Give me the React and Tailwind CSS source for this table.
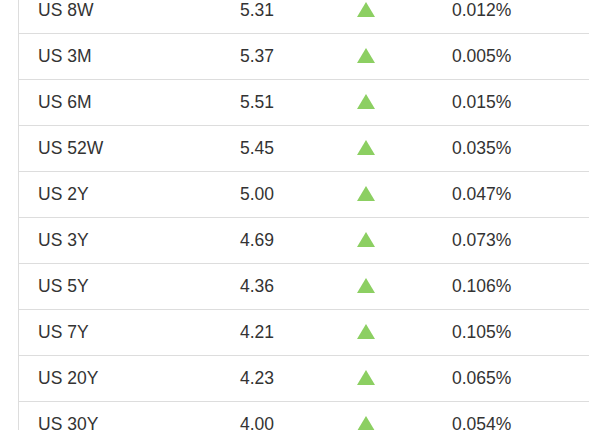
import React from 'react';

const rows = [
  { name: 'US 8W', value: '5.31', change: '0.012%' },
  { name: 'US 3M', value: '5.37', change: '0.005%' },
  { name: 'US 6M', value: '5.51', change: '0.015%' },
  { name: 'US 52W', value: '5.45', change: '0.035%' },
  { name: 'US 2Y', value: '5.00', change: '0.047%' },
  { name: 'US 3Y', value: '4.69', change: '0.073%' },
  { name: 'US 5Y', value: '4.36', change: '0.106%' },
  { name: 'US 7Y', value: '4.21', change: '0.105%' },
  { name: 'US 20Y', value: '4.23', change: '0.065%' },
  { name: 'US 30Y', value: '4.00', change: '0.054%' },
];

const UpArrow = () => (
  <svg width="18" height="15" viewBox="0 0 18 15" className="block">
    <polygon points="9,0 18,15 0,15" fill="#8ccf62" />
  </svg>
);

const App = () => {
  return (
    <div className="h-[430px] w-[589px] overflow-hidden bg-white font-['Liberation_Sans',Arial,sans-serif] text-[17.5px] text-[#333]">
      <div className="ml-[18px] -mt-[12px] border-l border-[#ddd]">
        {rows.map((row) => (
          <div key={row.name} className="flex h-[46px] items-center border-b border-[#ddd]">
            <div className="w-[221px] pl-[19px]">{row.name}</div>
            <div className="w-[117px]">{row.value}</div>
            <div className="w-[95px] -mt-[3px]">
              <UpArrow />
            </div>
            <div>{row.change}</div>
          </div>
        ))}
      </div>
    </div>
  );
};

export default App;
